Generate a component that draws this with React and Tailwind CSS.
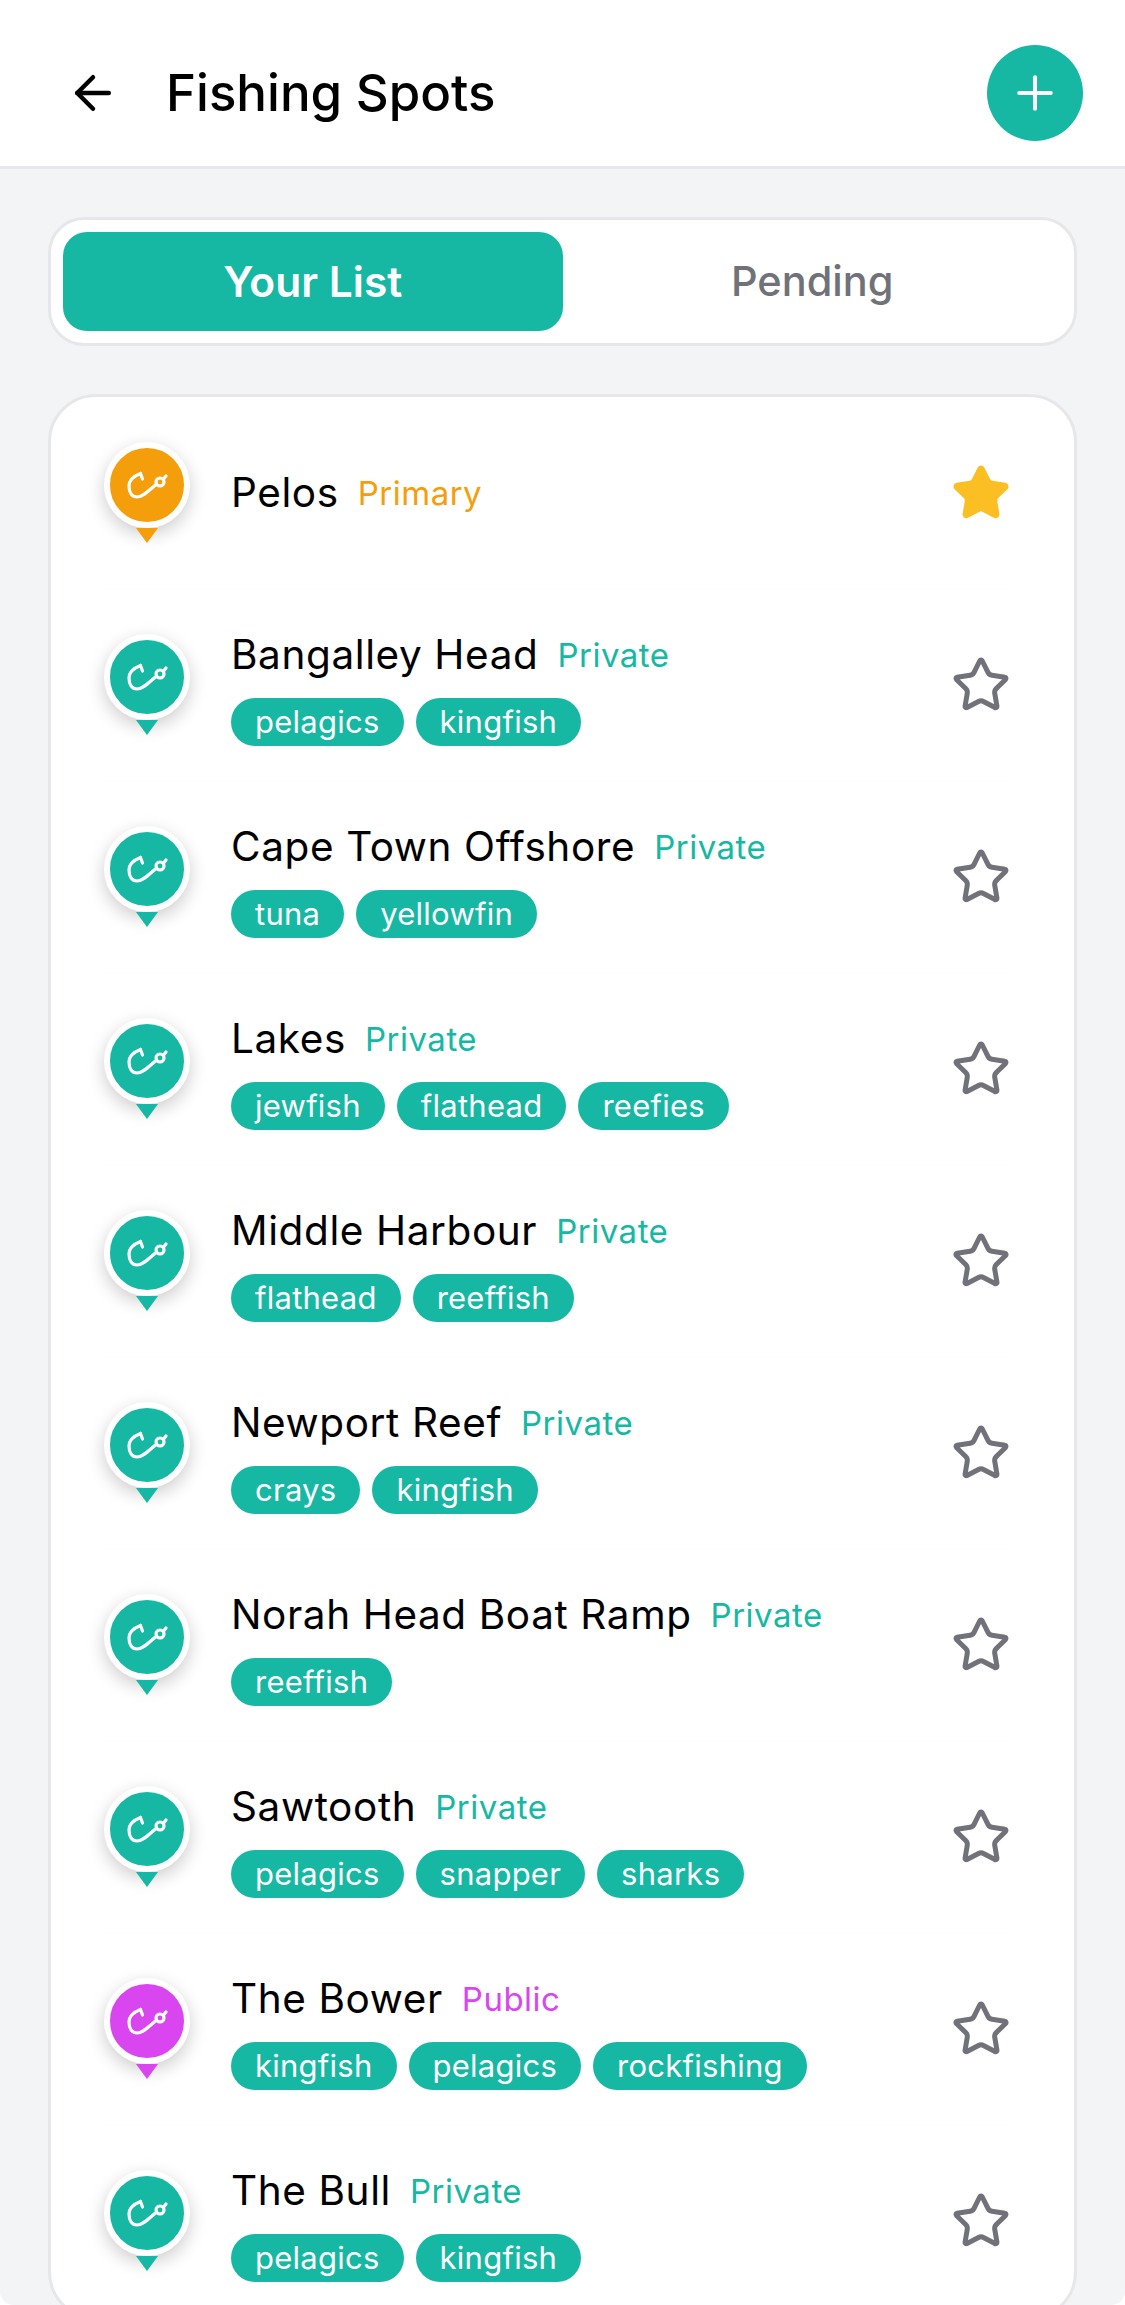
import React from 'react';
import { ArrowLeft, Plus, Star } from 'lucide-react';

const SPOTS = [
  { name: 'Pelos', kind: 'Primary', tags: [], primary: true },
  { name: 'Bangalley Head', kind: 'Private', tags: ['pelagics', 'kingfish'] },
  { name: 'Cape Town Offshore', kind: 'Private', tags: ['tuna', 'yellowfin'] },
  { name: 'Lakes', kind: 'Private', tags: ['jewfish', 'flathead', 'reefies'] },
  { name: 'Middle Harbour', kind: 'Private', tags: ['flathead', 'reeffish'] },
  { name: 'Newport Reef', kind: 'Private', tags: ['crays', 'kingfish'] },
  { name: 'Norah Head Boat Ramp', kind: 'Private', tags: ['reeffish'] },
  { name: 'Sawtooth', kind: 'Private', tags: ['pelagics', 'snapper', 'sharks'] },
  { name: 'The Bower', kind: 'Public', tags: ['kingfish', 'pelagics', 'rockfishing'] },
  { name: 'The Bull', kind: 'Private', tags: ['pelagics', 'kingfish'] },
];

const KIND_TEXT = {
  Primary: 'text-[#f59e0b]',
  Private: 'text-[#16b8a3]',
  Public: 'text-[#d946ef]',
};

const KIND_BG = {
  Primary: 'bg-[#f59e0b]',
  Private: 'bg-[#16b8a3]',
  Public: 'bg-[#d946ef]',
};

const KIND_TIP = {
  Primary: 'border-t-[#f59e0b]',
  Private: 'border-t-[#16b8a3]',
  Public: 'border-t-[#d946ef]',
};

function Hook() {
  return (
    <svg className="ml-[2px]" width="42" height="30" viewBox="0 0 42 30" fill="none" stroke="white" strokeWidth="3.2" strokeLinecap="round" strokeLinejoin="round">
      <path d="M13.5 3.5 C7 6 2 10 2 16 C2 23 5 27 10 27 C16 27 21 21 28.5 15" />
      <circle cx="33" cy="12" r="4" />
      <path d="M36.5 9 L39 6" />
      <path d="M13.5 3.5 L15.5 9" />
    </svg>
  );
}

function Pin({ kind }) {
  return (
    <div className="w-[86px] h-[102px] flex flex-col items-center shrink-0">
      <div className={`w-[86px] h-[86px] rounded-full border-[6px] border-white flex items-center justify-center shadow-[0_6px_18px_rgba(0,0,0,0.2)] ${KIND_BG[kind]}`}>
        <Hook />
      </div>
      <div className={`w-0 h-0 border-x-[11px] border-x-transparent border-t-[15px] ${KIND_TIP[kind]}`}></div>
    </div>
  );
}

function SpotRow({ spot, last }) {
  return (
    <div className={`h-[192px] ml-[53px] mr-[63px] flex items-center ${last ? '' : 'border-b border-[#fdfdfd]'}`}>
      <Pin kind={spot.kind} />
      <div className="ml-[41px] flex-1 min-w-0">
        <div className="flex items-center">
          <span className="text-[40.5px] leading-[60px] text-black tracking-[0.6px]">{spot.name}</span>
          <span className={`ml-[19px] text-[33px] leading-[60px] tracking-[0.5px] ${KIND_TEXT[spot.kind]}`}>{spot.kind}</span>
        </div>
        {spot.tags.length > 0 && (
          <div className="flex gap-[12px] mt-[13px] mb-[-1px]">
            {spot.tags.map(tag => (
              <span key={tag} className="h-[48px] px-[24px] rounded-[24px] bg-[#16b8a3] text-white text-[31px] leading-[48px] tracking-[0.25px]">{tag}</span>
            ))}
          </div>
        )}
      </div>
      <Star
        size={60}
        strokeWidth={2}
        className={spot.primary ? 'text-[#fbbf24]' : 'text-[#71717a]'}
        fill={spot.primary ? '#fbbf24' : 'none'}
      />
    </div>
  );
}

export default function App() {
  return (
    <div className="w-[1125px] h-[2305px] overflow-hidden rounded-b-[14px] bg-[#f3f4f6] font-['Inter',sans-serif]">
      {/* Header */}
      <div className="h-[169px] bg-white border-b-[3px] border-[#e5e7eb] flex items-center pl-[66px] pr-[42px] pt-[20px]">
        <ArrowLeft size={54} strokeWidth={2} className="text-black" />
        <h1 className="ml-[46px] flex-1 text-[51px] font-medium text-black">Fishing Spots</h1>
        <button className="w-[96px] h-[96px] rounded-full bg-[#16b8a3] flex items-center justify-center">
          <Plus size={54} strokeWidth={1.8} className="text-white" />
        </button>
      </div>

      <div className="px-[48px] pt-[48px]">
        {/* Tabs */}
        <div className="h-[129px] bg-white rounded-[36px] border-[3px] border-[#e5e7eb] p-[12px] flex">
          <div className="flex-1 rounded-[24px] bg-[#16b8a3] flex items-center justify-center text-white text-[42.5px] font-semibold">Your List</div>
          <div className="flex-1 flex items-center justify-center text-[#71717a] text-[41.5px] font-medium">Pending</div>
        </div>

        {/* Spot list */}
        <div className="mt-[48px] bg-white rounded-[48px] border-[3px] border-[#e5e7eb]">
          {SPOTS.map((spot, i) => (
            <SpotRow key={spot.name} spot={spot} last={i === SPOTS.length - 1} />
          ))}
        </div>
      </div>
    </div>
  );
}
